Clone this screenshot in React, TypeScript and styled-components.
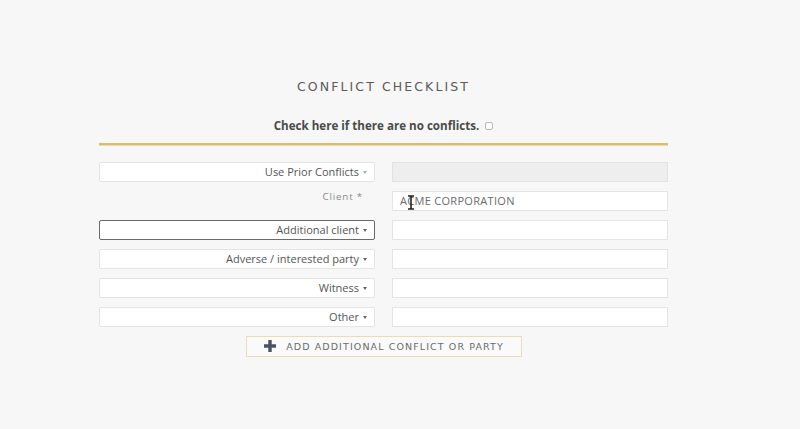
import React from 'react';
import styled, { createGlobalStyle } from 'styled-components';

const GlobalStyle = createGlobalStyle`
  html, body {
    margin: 0;
    padding: 0;
    background: #f7f7f7;
  }
  * {
    box-sizing: border-box;
  }
`;

const Page = styled.div`
  min-height: 429px;
  background: #f7f7f7;
  font-family: 'Open Sans', 'DejaVu Sans', sans-serif;
  padding-top: 79px;
`;

const Panel = styled.div`
  width: 569px;
  margin-left: 99px;
  display: flex;
  flex-direction: column;
  align-items: center;
`;

const Title = styled.h2`
  margin: 0;
  font-family: 'DejaVu Sans', sans-serif;
  font-size: 12.5px;
  font-weight: 400;
  letter-spacing: 2.1px;
  color: #5a5a5a;
  line-height: 16px;
`;

const NoConflicts = styled.label`
  margin-top: 23px;
  display: flex;
  align-items: center;
  gap: 6px;
  font-size: 11.6px;
  font-weight: 700;
  color: #4a4a4a;
  line-height: 16px;
`;

const Box = styled.span`
  width: 8px;
  height: 8px;
  border: 1px solid #b8b8b8;
  border-radius: 2px;
  background: #fff;
`;

const Divider = styled.div`
  align-self: stretch;
  margin-top: 9px;
  height: 3px;
  background: #d6bd72;
  border-bottom: 1px solid #e6dab0;
`;

const Grid = styled.div`
  align-self: stretch;
  margin-top: 16px;
  display: grid;
  grid-template-columns: 276px 276px;
  column-gap: 17px;
  row-gap: 9px;
  grid-auto-rows: 20px;
`;

const Select = styled.div<{ focused?: boolean }>`
  display: flex;
  align-items: center;
  justify-content: flex-end;
  gap: 4px;
  padding: 0 7px 2px 0;
  background: #fff;
  border: 1px solid ${p => (p.focused ? '#6a6a6a' : '#e4e4e4')};
  border-radius: 2px;
  font-size: 11px;
  color: #555;
`;

const Caret = styled.span<{ muted?: boolean }>`
  width: 0;
  height: 0;
  margin-top: 2px;
  border-left: 2.5px solid transparent;
  border-right: 2.5px solid transparent;
  border-top: 3px solid ${p => (p.muted ? '#aaa' : '#666')};
`;

const Label = styled.div`
  display: flex;
  justify-content: flex-end;
  align-items: flex-start;
  padding-right: 12px;
  margin-top: -1px;
  font-size: 9.8px;
  letter-spacing: 0.8px;
  color: #8a8a8a;
`;

const Field = styled.div<{ disabled?: boolean }>`
  position: relative;
  display: flex;
  align-items: center;
  padding: 0 0 2px 7px;
  background: ${p => (p.disabled ? '#eeeeee' : '#fff')};
  border: 1px solid ${p => (p.disabled ? '#e2e2e2' : '#e4e4e4')};
  font-size: 11px;
  color: #6a6a6a;
  letter-spacing: 0.3px;
`;

const Cursor = styled.svg`
  position: absolute;
  left: 14px;
  top: 3px;
`;

const AddButton = styled.button`
  margin-top: 9px;
  width: 276px;
  height: 21px;
  display: flex;
  align-items: center;
  justify-content: center;
  gap: 9px;
  background: #fafafa;
  border: 1px solid #e9dcb6;
  font-family: 'DejaVu Sans', sans-serif;
  font-size: 9.5px;
  letter-spacing: 1.1px;
  color: #6a6a6a;
  padding: 0 0 1px 0;
`;

const Plus = styled.svg`
  flex: none;
`;

const parties = [
  { name: 'Additional client', focused: true },
  { name: 'Adverse / interested party' },
  { name: 'Witness' },
  { name: 'Other' },
];

export default function App() {
  return (
    <Page>
      <GlobalStyle />
      <Panel>
        <Title>CONFLICT CHECKLIST</Title>
        <NoConflicts>
          Check here if there are no conflicts.
          <Box />
        </NoConflicts>
        <Divider />
        <Grid>
          <Select>
            Use Prior Conflicts <Caret muted />
          </Select>
          <Field disabled />
          <Label>Client *</Label>
          <Field>
            ACME CORPORATION
            <Cursor width="8" height="15" viewBox="0 0 8 15">
              <path d="M1 1h6M4 1v13M1 14h6" stroke="#222" strokeWidth="1.6" fill="none" />
            </Cursor>
          </Field>
          {parties.map(p => (
            <React.Fragment key={p.name}>
              <Select focused={p.focused}>
                {p.name} <Caret />
              </Select>
              <Field />
            </React.Fragment>
          ))}
        </Grid>
        <AddButton>
          <Plus width="14" height="14" viewBox="0 0 14 14">
            <path d="M7 1v12M1 7h12" stroke="#4b5264" strokeWidth="3.4" />
          </Plus>
          ADD ADDITIONAL CONFLICT OR PARTY
        </AddButton>
      </Panel>
    </Page>
  );
}
